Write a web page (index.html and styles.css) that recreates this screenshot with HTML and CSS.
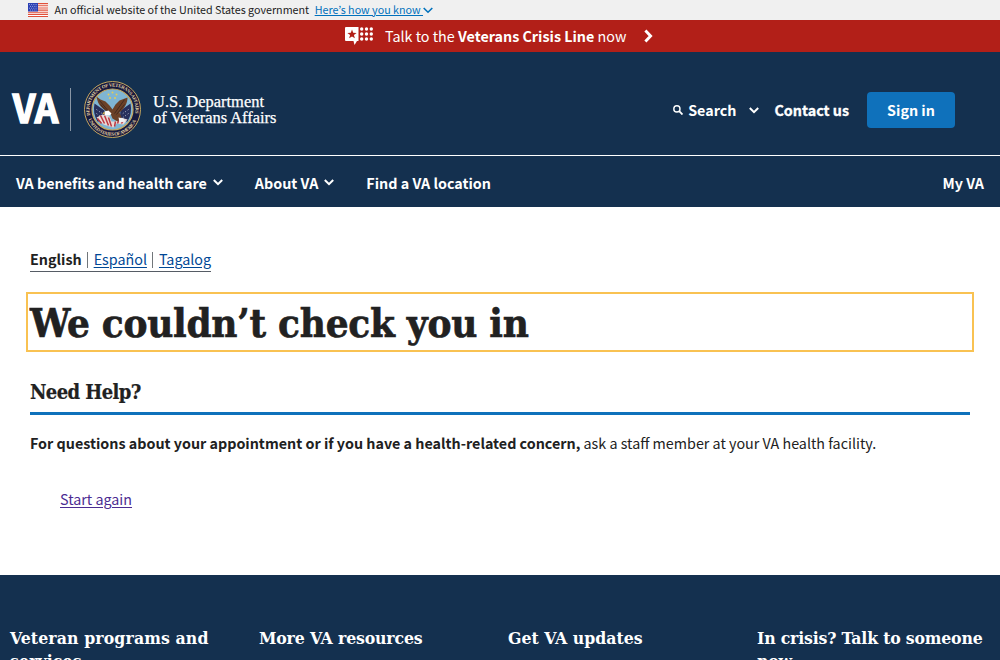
FILE: index.html
```
<!DOCTYPE html>
<html lang="en">
<head>
<meta charset="utf-8">
<title>We couldn’t check you in | Veterans Affairs</title>
<link rel="stylesheet" href="styles.css">
</head>
<body>
<div class="gov-banner">
  <svg class="flag" width="20" height="14" viewBox="0 0 20 14">
    <path fill="#fff" d="M0 0h20v14H0z"/>
    <path stroke="#e0503a" stroke-width="1.1" d="M0 .6h20M0 2.8h20M0 5h20M0 7.1h20M0 9.3h20M0 11.4h20M0 13.5h20"/>
    <path fill="#2a3fb4" d="M0 0h10v8.5H0z"/>
    <path stroke="#c8cdf0" stroke-width=".8" stroke-dasharray=".9 1.3" d="M1 1.6h8M2 3.4h7M1 5.2h8M2 7h7"/>
  </svg>
  <span class="gov-text">An official website of the United States government</span>
  <a class="gov-link" href="#">Here’s how you know&nbsp;</a>
  <svg class="gov-chevron" width="10" height="7" viewBox="0 0 10 7"><path fill="none" stroke="#0071bc" stroke-width="1.6" d="M.7 1 5 5.2 9.3 1"/></svg>
</div>
<div class="crisis">
  <svg class="crisis-icon" width="28" height="18" viewBox="0 0 28 18">
    <path fill="#fff" d="M1 0h12.500v14h-1.500L9.500 18 8.500 14H1q-1 0-1-1V1q0-1 1-1z"/>
    <path fill="#b21f18" d="M7 2.600 8.200 5.800l3.400.1-2.700 2.100 1 3.300L7 9.400l-2.900 1.900 1-3.300-2.700-2.100 3.400-.1z"/>
    <g fill="#fff"><circle cx="16.700" cy="2" r="1.700"/><circle cx="21.500" cy="2" r="1.700"/><circle cx="26.300" cy="2" r="1.700"/><circle cx="16.700" cy="7" r="1.700"/><circle cx="21.500" cy="7" r="1.700"/><circle cx="26.300" cy="7" r="1.700"/><circle cx="16.700" cy="12" r="1.700"/><circle cx="21.500" cy="12" r="1.700"/><circle cx="26.300" cy="12" r="1.700"/></g>
  </svg>
  <span class="crisis-text">Talk to the <b>Veterans Crisis Line</b> now</span>
  <svg width="9" height="14" viewBox="0 0 9 14"><path fill="none" stroke="#fff" stroke-width="2.900" d="m1.400 1.500 5.200 5.500-5.200 5.500"/></svg>
</div>
<header class="header">
  <div class="brand-row">
    <svg class="logo" width="270" height="60" viewBox="0 0 270 60">
      <text class="logo-va" x=".8" y="42.500" textLength="45.500" lengthAdjust="spacingAndGlyphs">VA</text>
      <path stroke="#8996a5" d="M58.500 8v43"/>
      <g transform="translate(100.500 29.500)">
        <circle r="28" fill="#17193f" stroke="#c4a75f" stroke-width="1"/>
        <circle r="20.500" fill="#7fb5d3" stroke="#c4a75f" stroke-width="1.200"/>
        <path id="arc-top" fill="none" d="M-22.200 6A23 23 0 1 1 22.200 6"/>
        <path id="arc-bottom" fill="none" d="M-24.800 8A26 26 0 0 0 24.800 8"/>
        <text class="seal-text"><textPath href="#arc-top" textLength="82">DEPARTMENT OF VETERANS AFFAIRS</textPath></text>
        <text class="seal-text"><textPath href="#arc-bottom" startOffset="2" textLength="60">UNITED STATES OF AMERICA</textPath></text>
        <g fill="#e6cc55"><circle cx="0" cy="-17" r="1"/><circle cx="-4" cy="-15" r="1"/><circle cx="4" cy="-15" r="1"/><circle cx="-2.500" cy="-11.500" r="1"/><circle cx="2.500" cy="-11.500" r="1"/></g>
        <path fill="#27305d" d="M-18-6-8 1-5 12-15 12Q-20 4-18-6zM18-6 8 1 7 12 15 12Q20 4 18-6z"/>
        <path stroke="#dde4ed" stroke-width=".8" stroke-dasharray="1 2" d="M-16 0l7 5M-16 4l7 5M16 0l-7 5M16 4l-7 5"/>
        <path fill="#e9d9d5" d="M-16 8-10 5-3 7-1 12 3 12 8 8 15 10 11 15 4 14 1 18-3 17-9 15z"/>
        <path fill="none" stroke="#bd3842" stroke-width="1.500" d="m-15 9 4 5M-12 6l4 8M-8 6l4 10M-4 8l3 9M3 12l-1 5M7 9l-2 5M11 10l-2 4"/>
        <path fill="#6b4127" d="M-2 4C-5 1-14 0-16-13l4 3 5 2 4 4 3 4 3-5 4-4 8-3C15-6 12-1 7 3l2 5-4 4-5-3z"/>
        <path fill="none" stroke="#37251e" stroke-width=".8" d="m-13-9 10 12M-12-5-3 5M12-10 2 4M12-5 4 5"/>
        <path fill="#fff" d="m-8 2 4-1 3 3-2 2-5 0z"/><path fill="#e2ba43" d="m-8 2-2 2 2 1z"/>
        <path fill="#eef1f6" d="m6 8 5 1 2 3-6 1z"/>
      </g>
      <text class="logo-name" x="141" y="26.800" textLength="111" lengthAdjust="spacingAndGlyphs">U.S. Department</text>
      <text class="logo-name" x="141" y="43.200" textLength="123.500" lengthAdjust="spacingAndGlyphs">of Veterans Affairs</text>
    </svg>
    <div class="tools">
      <svg class="search-icon" width="10" height="10" viewBox="0 0 10 10"><g fill="none" stroke="#fff" stroke-width="1.400"><circle cx="3.900" cy="3.900" r="3.100"/><path stroke-width="1.800" d="m6.200 6.200 3.300 3.300"/></g></svg>
      <span class="search">Search</span>
      <svg class="tool-chevron" width="10" height="7" viewBox="0 0 10 7"><path fill="none" stroke="#fff" stroke-width="2" d="M.8 1 5 5.200 9.200 1"/></svg>
      <a class="contact" href="#">Contact us</a>
      <button class="signin">Sign in</button>
    </div>
  </div>
  <nav class="nav">
    <span class="nav-1">VA benefits and health care</span>
    <svg class="nav-chevron" width="10" height="7" viewBox="0 0 10 7"><path fill="none" stroke="#fff" stroke-width="2" d="M.8 1 5 5.200 9.200 1"/></svg>
    <span class="nav-2">About VA</span>
    <svg class="nav-chevron" width="10" height="7" viewBox="0 0 10 7"><path fill="none" stroke="#fff" stroke-width="2" d="M.8 1 5 5.200 9.200 1"/></svg>
    <span class="nav-3">Find a VA location</span>
    <span class="nav-my">My VA</span>
  </nav>
</header>
<main class="main">
  <div class="languages"><b>English</b><i></i><a href="#">Español</a><i></i><a href="#">Tagalog</a></div>
  <h1 class="title"><span>We couldn’t check you in</span></h1>
  <h2 class="help-title">Need Help?</h2>
  <p class="help"><b>For questions about your appointment or if you have a health-related concern,</b> ask a staff member at your VA health facility.</p>
  <a class="again" href="#">Start again</a>
</main>
<footer class="footer">
  <h2 class="programs">Veteran programs and services</h2>
  <h2 class="resources">More VA resources</h2>
  <h2>Get VA updates</h2>
  <h2 class="help-line">In crisis? Talk to someone now</h2>
</footer>
</body>
</html>
```
FILE: styles.css
```
* { box-sizing: border-box; }
body {
  margin: 0;
  height: 660px;
  overflow: hidden;
  background: #fff;
  color: #212121;
  font: 14.32px/24px "Noto Sans CJK KR", "Open Sans", sans-serif;
}
svg { display: block; flex: none; }
a { color: #004795; text-underline-offset: 2px; }
.gov-banner {
  display: flex;
  align-items: center;
  height: 20px;
  padding-left: 28px;
  background: #f0f0f0;
  font-size: 10.74px;
  line-height: 18px;
  white-space: nowrap;
}
.gov-text { margin-left: 6.5px; }
.gov-link { margin-left: 5.5px; color: #0071bc; text-underline-offset: 1px; }
.gov-chevron { margin-left: -.5px; }
.crisis {
  display: flex;
  align-items: center;
  height: 32px;
  padding-left: 345px;
  background: #b21f18;
  color: #fff;
  white-space: nowrap;
}
.crisis-text { width: 247px; margin: 0 12px; }
.header { height: 155px; background: #14304f; color: #fff; font-weight: 700; }
.brand-row {
  display: flex;
  justify-content: space-between;
  height: 104px;
  padding: 28px 45px 0 12px;
  border-bottom: 1px solid #fff;
}
.logo { overflow: visible; }
.logo-va { fill: #fff; stroke: #fff; stroke-width: 1.6px; font: 700 38.5px/40px "Noto Sans CJK KR", sans-serif; }
.logo-name { fill: #fff; stroke: #fff; stroke-width: .25px; font: 400 17px/17px "Liberation Serif", serif; }
.seal-text { fill: #e2d3a1; font: 700 4.8px "Liberation Serif", serif; }
.tools { display: flex; align-items: center; height: 60px; white-space: nowrap; }
.search { margin-left: 5px; }
.tool-chevron { margin-left: 12.5px; }
.contact { margin: 0 18px 0 15.5px; color: #fff; text-decoration: none; -webkit-text-stroke: .3px #fff; }
.signin {
  width: 88px;
  height: 36px;
  padding: 0;
  border: 0;
  border-radius: 4px;
  background: #0f71bb;
  color: #fff;
  font: inherit;
}
.nav { display: flex; align-items: center; height: 51px; padding: 3px 16px 0; white-space: nowrap; }
.nav-chevron { margin: 0 32px 1px 6px; }
.nav-my { margin-left: auto; }
.main { display: flex; flex-direction: column; align-items: flex-start; height: 368px; padding: 40px 30px 0; }
.languages { display: flex; height: 25px; border-bottom: 1px solid #565c65; }
.languages i { width: 1px; height: 16px; margin: 5px 6px 0 5px; background: #71767a; }
.title {
  width: 948px;
  height: 60px;
  margin: 20px 0 0 -4px;
  padding-left: 4px;
  border: 2px solid #f9c252;
  font: 700 40px/58px "DejaVu Serif Condensed", "DejaVu Serif", serif;
  letter-spacing: -.27px;
  -webkit-text-stroke: .6px #212121;
}
.title span { margin-left: -2px; }
.help-title {
  width: 940px;
  height: 39px;
  margin: 24px 0 0;
  border-bottom: 3px solid #0f71bb;
  font: 700 20px/33px "DejaVu Serif Condensed", "DejaVu Serif", serif;
  letter-spacing: -.58px;
  -webkit-text-stroke: .2px #212121;
}
.help { margin: 16px 0 0; white-space: nowrap; }
.again { margin: 32px 0 0 30px; color: #4c2c92; }
.footer {
  display: grid;
  grid-template-columns: 249px 249px 249px 243px;
  height: 85px;
  padding: 52px 0 0 10px;
  overflow: hidden;
  background: #14304f;
  color: #fff;
}
.footer h2 { margin: 0; font: 700 17.500px/23px "DejaVu Serif Condensed", "DejaVu Serif", serif; }
.footer .programs { letter-spacing: .11px; }
.footer .resources { letter-spacing: -.16px; }
.footer .help-line { letter-spacing: -.19px; }
```
